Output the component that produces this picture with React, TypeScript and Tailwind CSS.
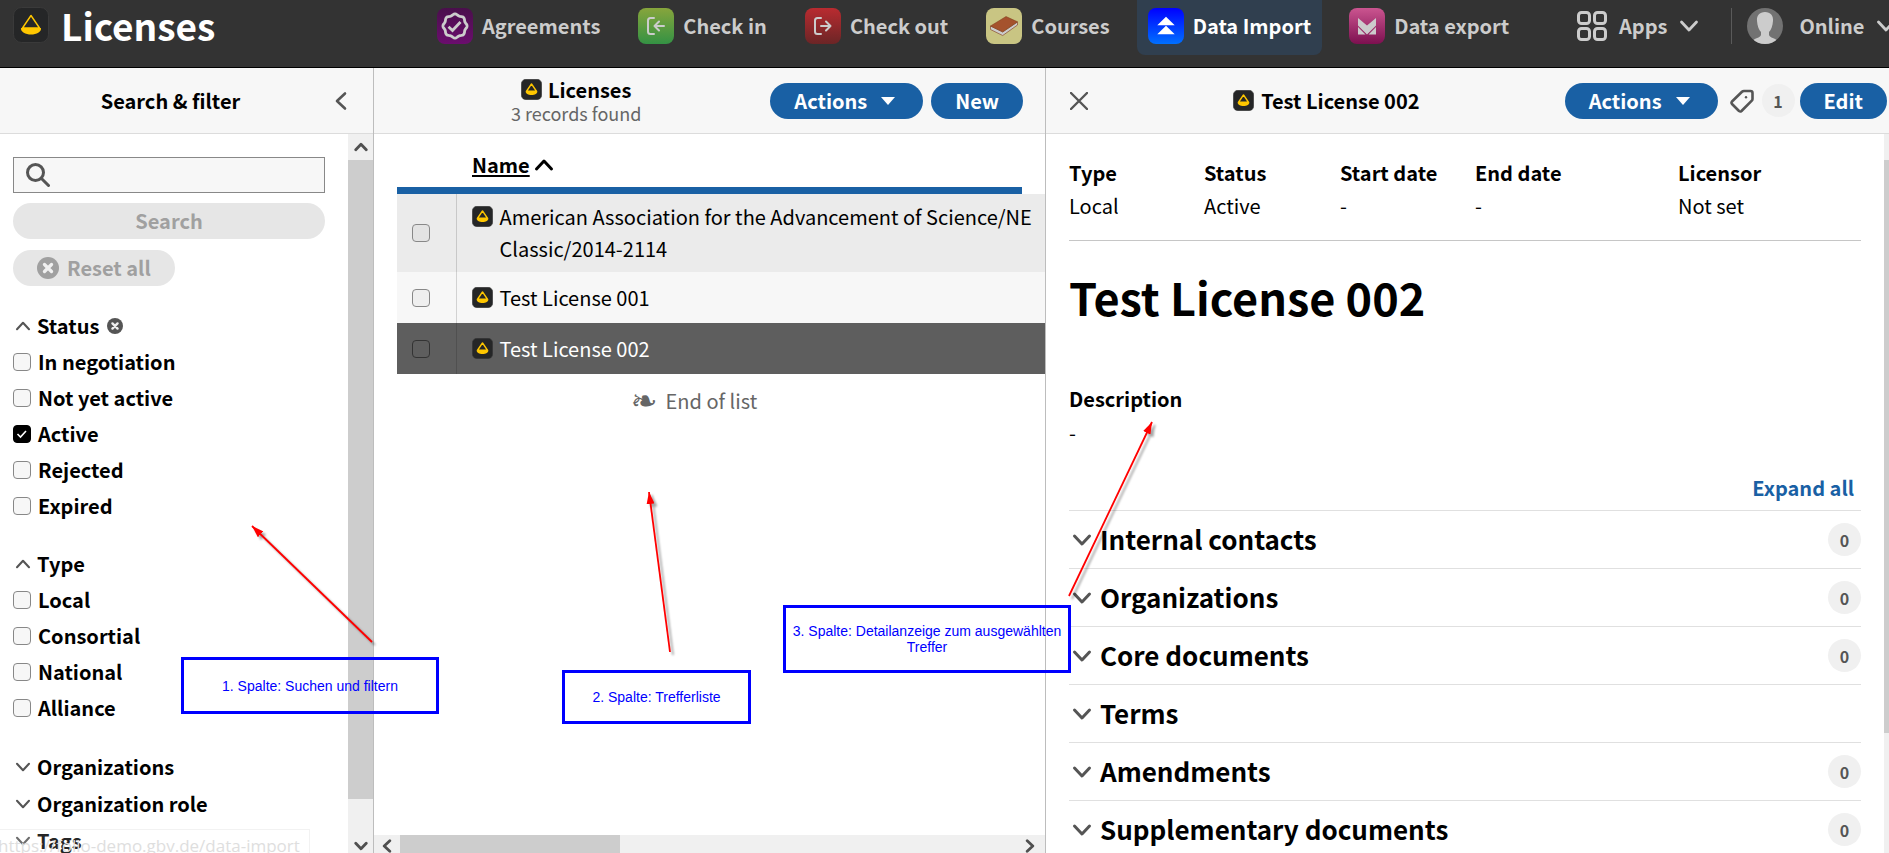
import type { ReactNode } from "react";

function LicenseIcon({ className, line = 2.4 }: { className: string; line?: number }) {
  return (
    <svg viewBox="0 0 36 36" className={className} aria-hidden="true">
      <rect x="0.5" y="0.5" width="35" height="35" rx="8" fill="#252627" stroke="#3a3a3a" />
      <path d="M18 8.500 L9.500 21 H26.500 Z" fill="none" stroke="#ffc700" strokeWidth={line} strokeLinejoin="round" />
      <path d="M8 21 H28 C28.500 25 23.500 27.500 18 27.500 C12.500 27.500 7.500 25 8 21 Z" fill="#ffc700" />
    </svg>
  );
}

function Chevron({ className, up = false, weight = 3 }: { className: string; up?: boolean; weight?: number }) {
  return (
    <svg viewBox="0 0 20 20" className={className} fill="none" stroke="currentColor" strokeWidth={weight} strokeLinecap="round" strokeLinejoin="round" aria-hidden="true">
      <path d={up ? "M2.500 14 L10 6 L17.500 14" : "M2.500 6 L10 14 L17.500 6"} />
    </svg>
  );
}

function CloseCircle({ className }: { className: string }) {
  return (
    <svg viewBox="0 0 20 20" className={className} aria-hidden="true">
      <circle cx="10" cy="10" r="10" fill="currentColor" />
      <path d="M6.800 6.800 L13.200 13.200 M13.200 6.800 L6.800 13.200" stroke="#f0f0f0" strokeWidth="3" strokeLinecap="round" />
    </svg>
  );
}

const sealPoints = Array.from({ length: 64 }, (_, i) => {
  const a = (i * Math.PI) / 32;
  const r = 11.4 + 0.7 * Math.cos(8 * a);
  return `${(18 + r * Math.sin(a)).toFixed(2)},${(18 - r * Math.cos(a)).toFixed(2)}`;
}).join(" ");

function Tile({ id, from, to, children }: { id: string; from: string; to: string; children: ReactNode }) {
  return (
    <svg viewBox="0 0 36 36" className="size-9 shrink-0" aria-hidden="true">
      <defs>
        <linearGradient id={id} x1="0" y1="0" x2="0" y2="1">
          <stop offset="0" stopColor={from} />
          <stop offset="1" stopColor={to} />
        </linearGradient>
      </defs>
      <rect width="36" height="36" rx="8" fill={`url(#${id})`} />
      {children}
    </svg>
  );
}

const apps = [
  {
    label: "Agreements",
    icon: (
      <Tile id="agreements" from="#4a0f4c" to="#6b0d6e">
        <polygon points={sealPoints} fill="none" stroke="#ccc" strokeWidth="2.800" strokeLinejoin="round" />
        <path d="M11.500 18.800 L15.500 22.500 L23.500 14" fill="none" stroke="#ccc" strokeWidth="2.800" />
      </Tile>
    ),
  },
  {
    label: "Check in",
    icon: (
      <Tile id="checkin" from="#87a53c" to="#349244">
        <path d="M16 10 H12.500 Q10 10 10 12.500 V23.500 Q10 26 12.500 26 H16 M26 18 H16.500 M21 13.500 L16.500 18 L21 22.500" fill="none" stroke="#ccc" strokeWidth="2" strokeLinecap="round" strokeLinejoin="round" />
      </Tile>
    ),
  },
  {
    label: "Check out",
    icon: (
      <Tile id="checkout" from="#b92b30" to="#6b2526">
        <path d="M16 10 H12.500 Q10 10 10 12.500 V23.500 Q10 26 12.500 26 H16 M16 18 H25.500 M21 13.500 L25.500 18 L21 22.500" fill="none" stroke="#ccc" strokeWidth="2" strokeLinecap="round" strokeLinejoin="round" />
      </Tile>
    ),
  },
  {
    label: "Courses",
    icon: (
      <Tile id="courses" from="#c9c583" to="#c9c583">
        <path d="M4.500 18 L16.700 24 L31.500 14 V17 L16.700 27.500 L4.500 21.500 Z" fill="#ccc" stroke="#8a4a30" strokeWidth="0.700" strokeLinejoin="round" />
        <path d="M4.500 18 L20 8.500 L31.500 13.800 L16.700 23.800 Z" fill="#a5522d" stroke="#7a3a1c" strokeWidth="0.500" strokeLinejoin="round" />
      </Tile>
    ),
  },
  {
    label: "Data Import",
    active: true,
    icon: (
      <Tile id="import" from="#0000ff" to="#0070ff">
        <path d="M18 8.700 L26.700 17.300 H9.300 Z M18 17.700 L26.700 26.300 H9.300 Z" fill="#fff" />
      </Tile>
    ),
  },
  {
    label: "Data export",
    icon: (
      <Tile id="export" from="#cb5590" to="#7d1050">
        <path d="M9 10 L18 17.500 L27 10 V17.500 L18 26.500 L9 17.500 Z M9 19 L16.500 26.500 H9 Z M27 19 V26.500 H19.500 Z" fill="#ccc" />
      </Tile>
    ),
  },
];

function Box({ checked = false, label, id, dark = false }: { checked?: boolean; label?: string; id: string; dark?: boolean }) {
  return (
    <input
      id={id}
      type="checkbox"
      defaultChecked={checked}
      aria-label={label}
      className={
        dark
          ? "size-[18px] shrink-0 appearance-none rounded border border-[#333] bg-transparent"
          : "size-[18px] shrink-0 appearance-none rounded border border-[#888] bg-black/[0.03] checked:border-black checked:bg-black"
      }
    />
  );
}

function FilterGroup({ title, options, clearable = false }: { title: string; options: string[]; clearable?: boolean }) {
  return (
    <fieldset className="mb-[22px]">
      <legend className="flex h-9 items-center gap-2">
        <button type="button" className="flex items-center gap-1.5 pl-0.5">
          <Chevron up className="size-4 text-[#555]" weight={2.6} />
          {title}
        </button>
        {clearable && (
          <button type="button" aria-label="Clear status" className="text-[#555]">
            <CloseCircle className="size-4" />
          </button>
        )}
      </legend>
      {options.map((o) => (
        <div key={o} className="flex h-9 items-center gap-[7px]">
          <span className="relative flex">
            <Box id={`filter-${o}`} checked={o === "Active"} />
            {o === "Active" && (
              <svg viewBox="0 0 18 18" className="pointer-events-none absolute inset-0 size-[18px]" fill="none" stroke="#fff" strokeWidth="1.600" aria-hidden="true">
                <path d="M4.500 9 L7.500 12 L13 6" />
              </svg>
            )}
          </span>
          <label htmlFor={`filter-${o}`}>{o}</label>
        </div>
      ))}
    </fieldset>
  );
}

function FilterPane() {
  return (
    <section className="flex w-[374px] shrink-0 flex-col border-r border-[#bdbdbd]">
      <header className="flex h-[66px] shrink-0 items-center border-b border-[#dcdcdc] bg-[#f7f7f7] pr-[22px]">
        <h2 className="flex-1 pl-2.5 text-center">Search &amp; filter</h2>
        <button type="button" aria-label="Collapse filters" className="text-[#555]">
          <Chevron className="size-5 rotate-90" weight={2.6} />
        </button>
      </header>
      <div className="flex min-h-0 flex-1">
        <form className="flex-1 overflow-hidden pt-[23px] pr-[23px] pl-[13px]">
          <label className="flex h-9 items-center border border-[#888] bg-[#f7f7f7] pl-3">
            <svg viewBox="0 0 24 24" className="size-6 text-[#555]" fill="none" stroke="currentColor" strokeWidth="3" strokeLinecap="round" aria-hidden="true">
              <circle cx="9.500" cy="9.500" r="8" />
              <path d="M15.500 15.500 L22.500 22.500" />
            </svg>
            <input type="search" aria-label="Search licenses" className="ml-2 min-w-0 flex-1 bg-transparent outline-none" />
          </label>
          <button type="button" disabled className="mt-2.5 h-9 w-full rounded-full bg-[#e6e6e6] text-[#a0a0a0]">
            Search
          </button>
          <button type="button" disabled className="mt-[11px] flex h-9 items-center gap-2 rounded-full bg-[#e6e6e6] px-6 text-[#a0a0a0]">
            <CloseCircle className="size-[22px]" />
            Reset all
          </button>
          <div className="pt-[22px]">
            <FilterGroup title="Status" clearable options={["In negotiation", "Not yet active", "Active", "Rejected", "Expired"]} />
            <FilterGroup title="Type" options={["Local", "Consortial", "National", "Alliance"]} />
            {["Organizations", "Organization role", "Tags"].map((t) => (
              <button key={t} type="button" className="flex h-[37px] w-full items-center gap-1.5 pl-0.5">
                <Chevron className="size-4 text-[#555]" weight={2.6} />
                {t}
              </button>
            ))}
          </div>
        </form>
        <div className="flex w-[25px] flex-col bg-[#f0f0f0]">
          <div className="flex h-[26px] items-center justify-center text-[#505050]">
            <Chevron up className="size-3.5" weight={4} />
          </div>
          <div className="h-[640px] bg-[#cdcdcd]" />
          <div className="mt-10 flex justify-center text-[#505050]">
            <Chevron className="size-3.5" weight={4} />
          </div>
        </div>
      </div>
    </section>
  );
}

const licenses = [
  { name: ["American Association for the Advancement of Science/NE", "Classic/2014-2114"], row: "h-[78px] bg-[#ebebeb] text-black", dark: false },
  { name: ["Test License 001"], row: "h-[51px] bg-[#f7f7f7] text-black", dark: false },
  { name: ["Test License 002"], row: "h-[51px] bg-[#5e5e5e] text-white", dark: true },
];

function ActionsButton() {
  return (
    <button type="button" className="flex h-9 items-center gap-3.5 rounded-full bg-[#1960a4] pr-7 pl-6 text-white">
      Actions
      <svg viewBox="0 0 14 8" className="h-2 w-3.5" aria-hidden="true">
        <path d="M0 0 H14 L7 8 Z" fill="#fff" />
      </svg>
    </button>
  );
}

function ResultsPane() {
  return (
    <section className="flex w-[672px] shrink-0 flex-col border-r border-[#bdbdbd]">
      <header className="flex h-[66px] shrink-0 items-center gap-2 border-b border-[#dcdcdc] bg-[#f7f7f7] pr-[22px]">
        <div className="flex flex-1 flex-col items-center pl-4">
          <h2 className="flex items-center gap-1.5 leading-6">
            <LicenseIcon className="size-[21px]" />
            Licenses
          </h2>
          <p className="text-[18px] leading-[22px] font-normal text-[#666]">3 records found</p>
        </div>
        <ActionsButton />
        <button type="button" className="h-9 rounded-full bg-[#1960a4] px-6 text-white">
          New
        </button>
      </header>
      <div className="min-h-0 flex-1 overflow-hidden pl-[23px]">
        <table className="w-[760px] border-collapse text-left">
          <thead>
            <tr className="h-[53px]">
              <th className="w-[59px]" aria-label="Select" />
              <th className="pt-2 pl-4">
                <button type="button" className="flex items-center gap-1 font-bold">
                  <span className="underline underline-offset-2">Name</span>
                  <Chevron up className="size-5" weight={3} />
                </button>
              </th>
            </tr>
            <tr className="h-[7px]">
              <td colSpan={2} className="p-0">
                <div className="h-[7px] w-[625px] bg-[#1960a4]" />
              </td>
            </tr>
          </thead>
          <tbody className="font-normal">
            {licenses.map((l) => (
              <tr key={l.name[0]} className={l.row}>
                <td className="border-r border-black/15 p-0 pl-[15px]">
                  <div className="flex">
                    <Box id={`select-${l.name[0]}`} label={`Select ${l.name[0]}`} dark={l.dark} />
                  </div>
                </td>
                <td className="p-0 pl-[15px]">
                  <div className="flex gap-[7px]">
                    <LicenseIcon className="mt-[5px] size-[21px] shrink-0" />
                    <div>
                      {l.name.map((n) => (
                        <div key={n} className="leading-8 whitespace-nowrap">
                          {n}
                        </div>
                      ))}
                    </div>
                  </div>
                </td>
              </tr>
            ))}
          </tbody>
        </table>
        <p className="flex h-[54px] items-center justify-center gap-2 pr-[54px] font-normal text-[#666]">
          <span className="font-['DejaVu_Sans'] text-[32px] leading-8">❧</span>
          End of list
        </p>
      </div>
      <div className="flex h-[18px] shrink-0 overflow-hidden bg-[#f0f0f0] text-[#505050]">
        <div className="flex w-[26px] justify-center pt-1">
          <Chevron className="size-3.5 rotate-90" weight={4} />
        </div>
        <div className="w-[220px] bg-[#cdcdcd]" />
        <div className="ml-auto flex w-[30px] justify-center pt-1">
          <Chevron className="size-3.5 -rotate-90" weight={4} />
        </div>
      </div>
    </section>
  );
}

const facts = [
  ["Type", "Local"],
  ["Status", "Active"],
  ["Start date", "-"],
  ["End date", "-"],
  ["Licensor", "Not set"],
];

const sections = [
  { title: "Internal contacts", count: 0 },
  { title: "Organizations", count: 0 },
  { title: "Core documents", count: 0 },
  { title: "Terms" },
  { title: "Amendments", count: 0 },
  { title: "Supplementary documents", count: 0 },
];

function DetailPane() {
  return (
    <section className="flex min-w-0 flex-1 flex-col">
      <header className="flex h-[66px] shrink-0 items-center border-b border-[#dcdcdc] bg-[#f7f7f7] pr-0.5 pl-6">
        <button type="button" aria-label="Close" className="text-[#555]">
          <svg viewBox="0 0 18 18" className="size-[18px]" stroke="currentColor" strokeWidth="2.400" strokeLinecap="round" aria-hidden="true">
            <path d="M1 1 L17 17 M17 1 L1 17" />
          </svg>
        </button>
        <h2 className="flex flex-1 items-center justify-center gap-[7px]">
          <LicenseIcon className="size-[21px]" />
          Test License 002
        </h2>
        <ActionsButton />
        <button type="button" className="mr-[5px] ml-3 flex items-center gap-2 text-[#555]">
          <svg viewBox="0 0 24 24" className="size-6" fill="none" stroke="currentColor" strokeWidth="2.600" strokeLinejoin="round" aria-hidden="true">
            <path d="M14 2 H20.500 Q22.500 2 22.500 4 V10 Q22.500 11 21.800 11.700 L11.500 22 Q10.300 23 9 22 L2 15 Q1 13.700 2 12.500 L12 2.800 Q12.800 2 14 2 Z" />
            <circle cx="16" cy="8.300" r="1.200" fill="currentColor" stroke="none" />
          </svg>
          <span className="flex size-[33px] items-center justify-center rounded-full bg-[#f0f0f0] text-base">1</span>
        </button>
        <button type="button" className="h-9 rounded-full bg-[#1960a4] px-6 text-white">
          Edit
        </button>
      </header>
      <div className="flex min-h-0 flex-1">
        <div className="min-w-0 flex-1 overflow-hidden pr-[23px] pl-[23px]">
          <dl className="grid h-[107px] grid-cols-[135px_136px_135px_203px_1fr] border-b border-[#c6c6c6] pt-[23px]">
            {facts.map(([k, v]) => (
              <div key={k}>
                <dt className="leading-8">{k}</dt>
                <dd className="leading-[34px] font-normal">{v}</dd>
              </div>
            ))}
          </dl>
          <h1 className="pt-[26px] text-[45px] leading-[60px]">Test License 002</h1>
          <h3 className="pt-14 leading-8">Description</h3>
          <p className="leading-9 font-normal">-</p>
          <div className="flex justify-end pt-[21px] pr-[7px] pb-1.5">
            <button type="button" className="leading-8 text-[#1960a4]">
              Expand all
            </button>
          </div>
          {sections.map((s) => (
            <button key={s.title} type="button" className="flex h-[58px] w-full items-center gap-2 border-t border-[#e0e0e0] pl-[3px] text-[26px]">
              <Chevron className="size-5 text-[#555]" weight={3} />
              {s.title}
              {s.count !== undefined && (
                <span className="ml-auto flex size-[33px] items-center justify-center rounded-full bg-[#f0f0f0] text-base text-[#555]">{s.count}</span>
              )}
            </button>
          ))}
        </div>
        <div className="w-[5px] bg-[#f0f0f0] pt-[26px]">
          <div className="h-[573px] bg-[#cdcdcd]" />
        </div>
      </div>
    </section>
  );
}

function Note({ className, children }: { className: string; children: ReactNode }) {
  return (
    <div className={`absolute flex items-center justify-center border-[3px] border-[#0000ff] text-center font-['Liberation_Sans'] text-sm leading-4 font-normal text-[#0000ff] ${className}`}>
      {children}
    </div>
  );
}

const arrows = [
  { from: [372, 642], to: [252, 526] },
  { from: [670, 652], to: [649, 492] },
  { from: [1069, 596], to: [1152, 422] },
];

function Arrows() {
  return (
    <svg className="pointer-events-none absolute inset-0 h-[853px] w-[1889px] drop-shadow-[3px_3px_1px_rgba(0,0,0,0.35)]" viewBox="0 0 1889 853" aria-hidden="true">
      <defs>
        <marker id="head" viewBox="0 0 12 8" markerWidth="12" markerHeight="8" refX="12" refY="4" orient="auto" markerUnits="userSpaceOnUse">
          <path d="M0 0 L12 4 L0 8 Z" fill="#ff0000" />
        </marker>
      </defs>
      {arrows.map(({ from, to }) => (
        <line key={from[0]} x1={from[0]} y1={from[1]} x2={to[0]} y2={to[1]} stroke="#ff0000" strokeWidth="1.800" markerEnd="url(#head)" />
      ))}
    </svg>
  );
}

export default function App() {
  return (
    <div className="relative flex h-screen flex-col overflow-hidden bg-white font-['Noto_Sans_CJK_SC',sans-serif] text-xl font-bold text-black">
      <header className="flex h-[68px] shrink-0 border-b border-black bg-[#333] text-[#ccc]">
        <div className="flex h-[50px] w-[426px] shrink-0 items-center gap-3 pl-[13px] text-white">
          <LicenseIcon className="size-9" line={1.4} />
          <span className="text-[37px] leading-[48px]">Licenses</span>
        </div>
        <nav className="flex h-[55px] shrink-0 gap-4">
          {apps.map((a) => (
            <a key={a.label} href="#" className={a.active ? "flex items-center gap-[9px] rounded-b-lg bg-[#303f4f] px-[11px] pb-[3px] text-white" : "flex items-center gap-[9px] px-[11px] pb-[3px]"}>
              {a.icon}
              {a.label}
            </a>
          ))}
        </nav>
        <div className="ml-auto flex h-[52px] w-[312px] shrink-0 items-center overflow-hidden">
          <button type="button" className="flex shrink-0 items-center gap-3">
            <svg viewBox="0 0 30 30" className="size-[30px]" fill="none" stroke="currentColor" strokeWidth="3" aria-hidden="true">
              <rect x="1.500" y="1.500" width="11" height="11" rx="3" />
              <rect x="17.500" y="1.500" width="11" height="11" rx="3" />
              <rect x="1.500" y="17.500" width="11" height="11" rx="3" />
              <rect x="17.500" y="17.500" width="11" height="11" rx="3" />
            </svg>
            Apps
            <Chevron className="size-5" weight={2.8} />
          </button>
          <span className="mr-[15px] ml-8 h-9 w-px shrink-0 bg-[#5a5a5a]" />
          <button type="button" className="flex shrink-0 items-center gap-3">
            <svg viewBox="0 0 36 36" className="mr-1 size-9" aria-hidden="true">
              <clipPath id="avatar">
                <circle cx="18" cy="18" r="18" />
              </clipPath>
              <g clipPath="url(#avatar)">
                <rect width="36" height="36" fill="#727272" />
                <path d="M18 4 C23.500 4 26.500 7.500 26 13 C25.700 18 24 22 22 24 V27 C23 30 28 30 31 33 V36 H5 V33 C8 30 13 30 14 27 V24 C12 22 10.300 18 10 13 C9.500 7.500 12.500 4 18 4 Z" fill="#ccc" />
              </g>
            </svg>
            Online
            <Chevron className="size-5 shrink-0" weight={2.8} />
          </button>
        </div>
      </header>
      <main className="flex min-h-0 flex-1">
        <FilterPane />
        <ResultsPane />
        <DetailPane />
      </main>
      <div className="absolute bottom-0 left-0 flex h-6 w-[310px] items-start border-t border-r border-black/5 bg-white/15 font-['Open_Sans'] text-[17px] font-normal text-[#dedede]">
        <span className="-ml-0.5 pt-1 leading-6 whitespace-nowrap">https://folio-demo.gbv.de/data-import</span>
      </div>
      <Note className="top-[657px] left-[181px] h-[57px] w-[258px]">1. Spalte: Suchen und filtern</Note>
      <Note className="top-[670px] left-[562px] h-[54px] w-[189px]">2. Spalte: Trefferliste</Note>
      <Note className="top-[605px] left-[783px] h-[68px] w-[288px]">3. Spalte: Detailanzeige zum ausgewählten Treffer</Note>
      <Arrows />
    </div>
  );
}
